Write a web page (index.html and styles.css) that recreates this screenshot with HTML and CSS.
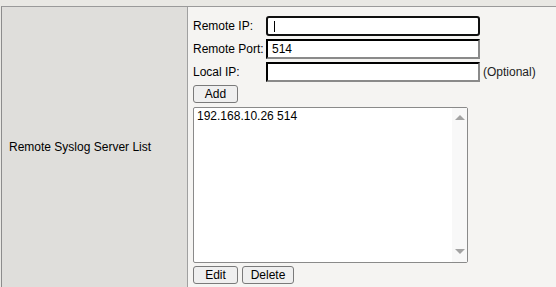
FILE: index.html
```html
<!DOCTYPE html>
<html>
<head>
    <title>Remote Syslog</title>
    <link rel="stylesheet" href="styles.css">
</head>
<body>
    <div class="topbar"></div>
    <div class="row">
        <div class="label-cell">Remote Syslog Server List</div>
        <div class="value-cell">
            <div class="fields">
                <label>Remote IP:</label>
                <input type="text" id="remoteIp" class="focused">
                <span></span>
                <label>Remote Port:</label>
                <input type="text" id="remotePort" value="514">
                <span></span>
                <label>Local IP:</label>
                <input type="text" id="localIp">
                <span class="hint">(Optional)</span>
            </div>
            <button class="btn btn-add">Add</button>
            <div class="list">
                <div class="list-items">
                    <div>192.168.10.26 514</div>
                </div>
                <div class="scroll">
                    <span class="arrow-up"></span>
                    <span class="arrow-down"></span>
                </div>
            </div>
            <div class="actions">
                <button class="btn btn-edit">Edit</button>
                <button class="btn btn-delete">Delete</button>
            </div>
        </div>
    </div>
</body>
</html>
```

FILE: styles.css
```css
body {
    margin: 0;
    background-color: #e9e8e4;
    font-family: "Liberation Sans", Arial, sans-serif;
    font-size: 12px;
    color: #000;
    overflow: hidden;
}
.topbar {
    height: 6px;
}
.row {
    display: flex;
    margin-left: 1px;
    border-top: 1px solid #9a9a9a;
    border-left: 1px solid #8c8c8c;
    height: 290px;
}
.label-cell {
    width: 178px;
    padding-left: 7px;
    padding-bottom: 10px;
    background-color: #dfdedb;
    border-right: 1px solid #a0a0a0;
    display: flex;
    align-items: center;
}
.value-cell {
    flex: 1;
    background-color: #f5f4f2;
    padding: 9px 0 4px 5px;
}
.fields {
    display: grid;
    grid-template-columns: 73px 214px auto;
    row-gap: 3px;
    align-items: center;
}
.fields input {
    box-sizing: border-box;
    width: 214px;
    height: 20px;
    margin: 0;
    padding: 1px 4px;
    font-family: "Liberation Sans", Arial, sans-serif;
    font-size: 12px;
    background-color: #fff;
    border: 2px inset #767676;
    border-top-color: #3c3c3c;
    border-left-color: #3c3c3c;
    border-bottom-color: #8a8a8a;
    border-right-color: #8a8a8a;
}
.fields input.focused {
    border: 2px solid #101010;
    border-radius: 3px;
    background: #fff linear-gradient(#000, #000) no-repeat 6px 3px / 1px 11px;
    outline: none;
}
.hint {
    padding-left: 3px;
    color: #222;
}
.btn {
    box-sizing: border-box;
    height: 18px;
    padding: 0;
    font-family: "Liberation Sans", Arial, sans-serif;
    font-size: 12px;
    color: #000;
    background-color: #efefef;
    border: 1px solid #7a7a7a;
    border-radius: 3px;
}
.btn-add {
    display: block;
    width: 45px;
    margin-top: 3px;
}
.list {
    box-sizing: border-box;
    display: flex;
    width: 275px;
    height: 156px;
    margin-top: 4px;
    background-color: #fff;
    border: 1px solid #8a8a8a;
    border-radius: 2px;
}
.list-items {
    flex: 1;
    padding: 1px 3px;
}
.scroll {
    width: 15px;
    background-color: #f8f8f8;
    display: flex;
    flex-direction: column;
    justify-content: space-between;
    align-items: center;
    padding: 7px 0 8px;
}
.arrow-up {
    width: 0;
    height: 0;
    border-left: 5px solid transparent;
    border-right: 5px solid transparent;
    border-bottom: 5px solid #a3a3a3;
}
.arrow-down {
    width: 0;
    height: 0;
    border-left: 5px solid transparent;
    border-right: 5px solid transparent;
    border-top: 5px solid #a3a3a3;
}
.actions {
    display: flex;
    gap: 4px;
    margin-top: 3px;
}
.btn-edit { width: 45px; }
.btn-delete { width: 52px; }
```
